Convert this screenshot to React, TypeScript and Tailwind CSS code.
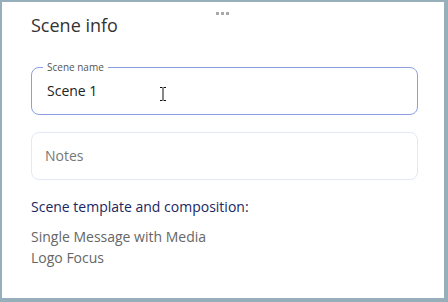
export default function App() {
  return (
    <div className="h-[302px] w-[448px] bg-[#96afbb] pl-[2px] pt-[2px] pr-[4px] pb-[4px] font-['Open_Sans',sans-serif]">
      <div className="relative flex h-full w-full flex-col bg-white pl-[29px] pr-[26px]">
        {/* drag handle */}
        <div className="absolute left-[214px] top-[10px] flex gap-[2px]">
          <span className="h-[3px] w-[3px] bg-[#aaa]" />
          <span className="h-[3px] w-[3px] bg-[#aaa]" />
          <span className="h-[3px] w-[3px] bg-[#aaa]" />
        </div>

        <h2 className="mt-[11px] text-[18px] leading-[24px] text-[#333]">Scene info</h2>

        {/* Scene name field */}
        <div className="relative mt-[30px] flex h-[48px] items-center rounded-[8px] border border-[#8d9fe3] px-[15px]">
          <span className="absolute left-[11px] top-[-8px] bg-white px-[4px] text-[10px] leading-[14px] text-[#555]">
            Scene name
          </span>
          <span className="text-[14px] leading-[20px] text-[#222]">Scene 1</span>
          <svg className="absolute left-[127px] top-[18px]" width="8" height="16" viewBox="0 0 8 16">
            <path d="M1 1.5h2.5M4.5 1.5H7M4 2v12M1 14.5h2.5M4.5 14.5H7" stroke="#111" strokeWidth="1" fill="none" />
          </svg>
        </div>

        {/* Notes field */}
        <div className="mt-[17px] flex h-[48px] items-center rounded-[8px] border border-[#e4e7f7] px-[13px]">
          <span className="text-[14px] leading-[20px] text-[#777]">Notes</span>
        </div>

        <p className="mt-[17px] text-[14px] leading-[20px] text-[#1a2762]">Scene template and composition:</p>
        <div className="mt-[9px] flex flex-col text-[14px] leading-[21px] text-[#666]">
          <span>Single Message with Media</span>
          <span>Logo Focus</span>
        </div>
      </div>
    </div>
  )
}
